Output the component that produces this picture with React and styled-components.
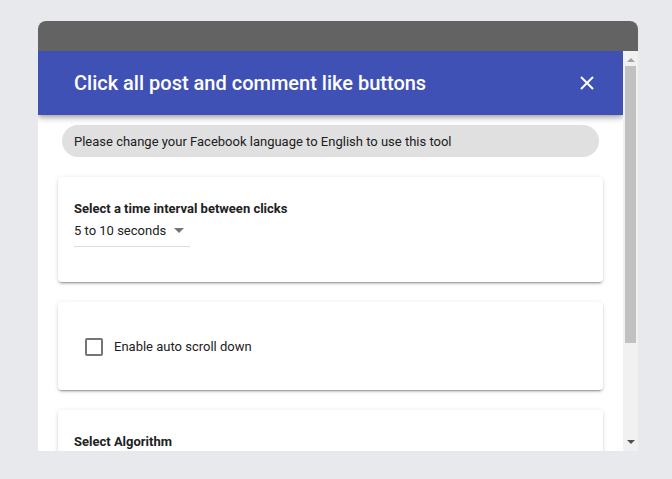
import React, { useState } from "react"
import styled, { createGlobalStyle } from "styled-components"

const GlobalStyle = createGlobalStyle`
  html, body {
    margin: 0;
    padding: 0;
    background: #e8e9ed;
    font-family: Roboto, "Noto Sans", sans-serif;
  }
`

const Page = styled.div`
  padding: 21px 34px 28px 38px;
`

const Window = styled.div`
  width: 600px;
  border-radius: 8px 8px 0 0;
  overflow: hidden;
  background: #fff;
`

const TitleBar = styled.div`
  height: 30px;
  background: #636363;
`

const Viewport = styled.div`
  height: 400px;
  display: flex;
`

const Scroller = styled.div`
  flex: 1;
  overflow: hidden;
  background: #fff;
`

const Scrollbar = styled.div`
  width: 15px;
  background: #f1f1f1;
  display: flex;
  flex-direction: column;
`

const ArrowCell = styled.div`
  height: 15px;
  display: flex;
  align-items: center;
  justify-content: center;

  &::before {
    content: "";
    width: 0;
    height: 0;
    border-left: 4px solid transparent;
    border-right: 4px solid transparent;
    ${p => (p.$up
      ? "border-bottom: 4px solid #a3a3a3; margin-top: 3px;"
      : "border-top: 4px solid #505050; margin-bottom: 3px;")}
  }
`

const Track = styled.div`
  flex: 1;
  padding: 0 2px;
`

const Thumb = styled.div`
  height: 277px;
  background: #c1c1c1;
`

const Header = styled.header`
  position: relative;
  z-index: 2;
  height: 64px;
  display: flex;
  align-items: center;
  justify-content: space-between;
  padding: 0 24px 0 36px;
  background: #3f51b5;
  color: #fff;
  box-shadow: 0 2px 4px -1px rgba(0,0,0,0.2), 0 4px 5px 0 rgba(0,0,0,0.14), 0 1px 10px 0 rgba(0,0,0,0.12);

  h1 {
    margin: 0;
    font-size: 20px;
    font-weight: 500;
    letter-spacing: 0;
  }
`

const CloseButton = styled.button`
  border: 0;
  background: none;
  padding: 0;
  width: 24px;
  height: 24px;
  display: flex;
  align-items: center;
  justify-content: center;
  cursor: pointer;
`

const Body = styled.div`
  padding: 10px 20px 20px 20px;
  display: flex;
  flex-direction: column;
  gap: 20px;
`

const Notice = styled.div`
  margin: 0 4px;
  height: 32px;
  border-radius: 16px;
  background: #e0e0e0;
  color: #212121;
  font-size: 13px;
  display: flex;
  align-items: center;
  padding: 0 12px;
`

const Card = styled.section`
  background: #fff;
  border-radius: 4px;
  box-shadow: 0 3px 1px -2px rgba(0,0,0,0.2), 0 2px 2px 0 rgba(0,0,0,0.14), 0 1px 5px 0 rgba(0,0,0,0.12);
  padding: 24px 16px;
  min-height: ${p => p.$minHeight || "auto"};
  box-sizing: border-box;
  display: flex;
  flex-direction: column;
  justify-content: ${p => (p.$center ? "center" : "flex-start")};
`

const Label = styled.div`
  font-size: 13px;
  font-weight: 700;
  color: #212121;
  margin-bottom: 5px;
`

const Select = styled.div`
  width: 116px;
  height: 26px;
  display: flex;
  align-items: center;
  justify-content: space-between;
  border-bottom: 1px solid #dcdcdc;
  font-size: 13px;
  color: #212121;
  padding-bottom: 6px;
  box-sizing: border-box;

  span.arrow {
    width: 0;
    height: 0;
    border-left: 5px solid transparent;
    border-right: 5px solid transparent;
    border-top: 5px solid #757575;
    margin-right: 6px;
  }
`

const CheckRow = styled.label`
  display: flex;
  align-items: center;
  gap: 11px;
  font-size: 13px;
  color: #212121;
  padding-left: 11px;
  margin-top: 1px;
  cursor: pointer;
`

const Box = styled.span`
  width: 18px;
  height: 18px;
  box-sizing: border-box;
  border: 2px solid #757575;
  border-radius: 2px;
  background: ${p => (p.$checked ? "#3f51b5" : "transparent")};
`

export default function App() {
  const [autoScroll, setAutoScroll] = useState(false)

  return (
    <>
      <GlobalStyle />
      <Page>
        <Window>
          <TitleBar />
          <Viewport>
            <Scroller>
              <Header>
                <h1>Click all post and comment like buttons</h1>
                <CloseButton aria-label="close">
                  <svg width="14" height="14" viewBox="0 0 14 14">
                    <path d="M1 1 L13 13 M13 1 L1 13" stroke="#fff" strokeWidth="2" />
                  </svg>
                </CloseButton>
              </Header>
              <Body>
                <Notice>Please change your Facebook language to English to use this tool</Notice>
                <Card $minHeight="105px">
                  <Label>Select a time interval between clicks</Label>
                  <Select>
                    5 to 10 seconds
                    <span className="arrow" />
                  </Select>
                </Card>
                <Card $minHeight="88px" $center>
                  <CheckRow onClick={() => setAutoScroll(!autoScroll)}>
                    <Box $checked={autoScroll} />
                    Enable auto scroll down
                  </CheckRow>
                </Card>
                <Card $minHeight="110px">
                  <Label>Select Algorithm</Label>
                </Card>
              </Body>
            </Scroller>
            <Scrollbar>
              <ArrowCell $up />
              <Track>
                <Thumb />
              </Track>
              <ArrowCell />
            </Scrollbar>
          </Viewport>
        </Window>
      </Page>
    </>
  )
}
